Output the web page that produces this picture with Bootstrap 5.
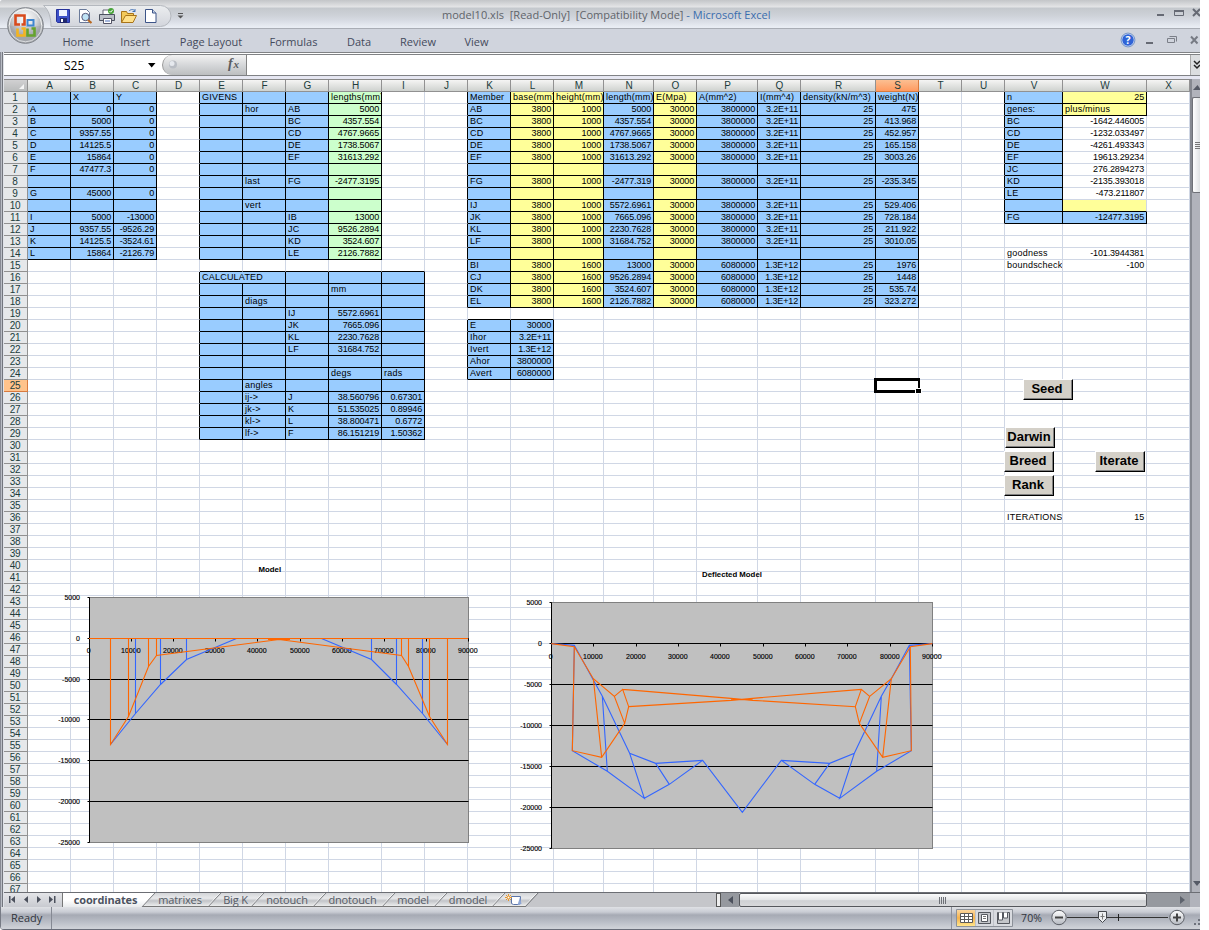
<!DOCTYPE html>
<html lang="en">
<head>
<meta charset="utf-8">
<title>model10.xls - Microsoft Excel</title>
<link href="https://cdn.jsdelivr.net/npm/bootstrap@5.3.0/dist/css/bootstrap.min.css" rel="stylesheet">
<style>
body{background:#fff;overflow:hidden;font-family:"Open Sans","Noto Sans",sans-serif;font-size:11px;line-height:1}
.win{width:1200px;height:930px;overflow:hidden;background:#d0d4dd;border-bottom:1px solid #686c78;border-radius:3px 0 0 4px}
.titlebar{height:29px;background:linear-gradient(#c3c5c8 0,#e4e5e7 7px,#c4c8cd 8px,#cdd1d7 15px,#d6dae2 20px,#e9edf4 27px);border-bottom:1px solid #a9adb5}
.caption-text{left:442px;top:9px;letter-spacing:.02px;color:#60646a;white-space:pre}
.caption-text b{font-weight:400;color:#3a6dae}
.menu-row{height:23px;padding-left:56px;color:#444a5c}
.menu-row span{text-align:center;padding-top:7px;padding-left:1px;white-space:nowrap}
.frame{width:1200px;border-left:1px solid #878a94;box-shadow:inset 1px 0 #b9bdc5,inset 2px 0 #73767e,inset 3px 0 #dfe2e8}
.fbar{margin-left:3px;height:24px;border-top:1px solid #808285;border-bottom:1px solid #808285;background:#fff;box-shadow:inset 0 1px #fff,inset 0 2px #808285}
.namebox{width:158px;font-size:12px;color:#000;padding-top:3px}
.fxpill{width:85px;margin-top:2px;background:linear-gradient(#f2f2f2,#d0d2d4 60%,#bcbec0);border-right:1px solid #838383;border-left:1px solid #989898;border-radius:10px 0 0 10px}
.gap{height:3px;margin-left:3px;background:#e6e7f2}
.sheet{margin-left:3px;height:813px;width:1186px;overflow:hidden;background:#fff}
.grid{table-layout:fixed;border-collapse:separate;border-spacing:0;width:1186px;font-family:"Liberation Sans",sans-serif;font-size:9px;color:#000;border-top:1px solid #888}
.grid th{font-weight:400;font-size:10px;text-align:center;padding:0;color:#203c3c;overflow:hidden;border-right:1px solid #919191;border-bottom:1px solid #919191;line-height:11px;height:12px}
.grid thead th{background:linear-gradient(#f5f5f4,#cfd2cf);padding-left:1px}
.grid thead th:first-child{padding:0}
.grid tbody th{background:#e6e8ea;padding-right:1px;letter-spacing:-.3px}
.grid thead th.sel{background:linear-gradient(#fcbf92,#ff9a60);border-color:#d87a3e}
.grid tbody th.sel{background:#ffc38b;border-color:#d87a3e}
.grid td{height:12px;padding:0 0 0 2px;line-height:11px;letter-spacing:.22px;border-right:1px solid #d0d7e5;border-bottom:1px solid #d0d7e5;overflow:hidden;white-space:nowrap}
.grid td.num{text-align:right;padding:0 2px 0 0;letter-spacing:-.15px}
.grid .bl{background:#9cf}.grid .ye{background:#ffff99}.grid .gr{background:#ccffcc}
.grid .br{border-right-color:#000}.grid .bb{border-bottom-color:#000}
.cbtn{width:50px;height:21px;background:#d4d0c8;border:1px solid #fff;border-right:1px solid #000;border-bottom:1px solid #000;box-shadow:inset -1px -1px #808080;font:bold 13px/14px "Liberation Sans",sans-serif;text-align:center;color:#000;padding:0 2px 2px 0;white-space:nowrap}
.cursor{left:870px;top:299px;width:46px;height:15px;border:2px solid #000;border-width:3px 2px 3px 3px}
.handle{left:911px;top:309px;width:7px;height:6px;background:#000;border:1px solid #fff}
.vscroll{width:10px;height:813px;background:#b1b3bb;border-left:2px solid #868991;overflow:hidden}
.vthumb{margin-top:3px;height:96px;background:linear-gradient(90deg,#fff,#dfe1e3);border:1px solid #6f7177;border-right:0;border-radius:2px 0 0 2px}
.tabs-row{margin-left:3px;height:15px;background:#c5c6ca;border-top:1px solid #6c6e74;color:#555b66}
.tabnav{width:59px;position:relative;z-index:2;background:linear-gradient(#e4e5e8,#c8cad0);border-right:1px solid #777}
.stab{position:relative;text-align:center;padding:1px 4px 0 0;z-index:1;white-space:nowrap;letter-spacing:-.15px;flex:none}
.stab::before{content:"";position:absolute;z-index:-1;inset:0 0 0 0;transform:skewX(-43deg);background:linear-gradient(#d3d5d8,#e8e9eb 40%,#c2c4c8 60%,#eceded);border-right:1px solid #686a6e;border-bottom:1px solid #777;box-shadow:inset -1px 0 #fff}
.stab.on{font-weight:700;padding-right:1px;color:#4c5260}
.stab.on::before{background:linear-gradient(#fff 50%,#e8eaec);left:-8px;border-bottom:0}
.statusbar{height:23px;background:linear-gradient(#dfe1e5 0,#c9ccd4 5px,#a6aab4 8px,#b7bbc4 14px,#ced1d7 21px);color:#30343c}
.hthumb{width:408px;background:linear-gradient(#fbfbfb,#e4e5e7 50%,#cfd1d4 55%,#d8d9db);border:1px solid #55575c;border-radius:2px}
svg{display:block}
.clab{font:7px "Liberation Sans",sans-serif;fill:#000;stroke:#000;stroke-width:.15px}
.ctitle{font:bold 7.8px "Liberation Sans",sans-serif}
</style>
</head>
<body>
<div class="win position-relative">
  <div class="titlebar position-relative">
    <div class="position-absolute caption-text">model10.xls  [Read-Only]  [Compatibility Mode] <b>- Microsoft Excel</b></div>
    <svg class="position-absolute top-0 start-0" width="200" height="50" style="z-index:3">
      <defs>
        <linearGradient id="pill" x2="0" y2="1"><stop stop-color="#eceef0"/><stop offset="1" stop-color="#d2d5dc"/></linearGradient>
        <radialGradient id="orb" cy=".3"><stop stop-color="#fff"/><stop offset=".6" stop-color="#d9dbde"/><stop offset="1" stop-color="#a5a8ac"/></radialGradient>
      </defs>
      <path d="M43.500 5.500h117a10.500 10.500 0 0 1 0 21H51C51 18 49 10 43.500 5.500z" fill="url(#pill)" stroke="#b4b8be"/>
      <circle cx="25.500" cy="25.500" r="17.800" fill="url(#orb)" stroke="#7f8389"/>
      <circle cx="25.500" cy="25.500" r="16.300" fill="none" stroke="#f7f8f8"/>
      <path d="M9 26h33a16.500 16.500 0 0 1-33 0z" fill="#9da0a4" opacity=".3"/>
      <g fill="none" stroke-width="2.600">
        <path d="M24.500 18v-2.500h-9v9h4.500M24.500 18v6.500h-3" stroke="#d84a1c"/>
        <path d="M27.500 20h6v5.500h-6z" stroke="#3d86d0" stroke-width="2"/>
        <path d="M17.500 28.500v7h7v-7h-3" stroke="#f4b41f"/>
        <path d="M27.500 28.500v7h7v-7h-3" stroke="#65a32d"/>
      </g>
      <!-- save -->
      <path d="M56.500 9.500h13v13h-12l-1-1z" fill="#3c50c8" stroke="#26329a"/><path d="M59 10h8v6h-8z" fill="#eef2ff"/><path d="M60 18h7v5h-7z" fill="#20286e"/><path d="M61 19h2v3h-2z" fill="#fff"/>
      <!-- print preview -->
      <path d="M79.500 9.500h7l3 3v10h-10z" fill="#fff" stroke="#6a7a9a"/><circle cx="85.500" cy="17" r="3.700" fill="#bfe3f5" stroke="#557"/><path d="M88 20l3.500 3" stroke="#b9681f" stroke-width="2.200"/>
      <!-- quick print -->
      <path d="M103 10h8v5h-8z" fill="#fff" stroke="#667"/><path d="M99.500 14.500h15v6h-15z" fill="#bcc0c8" stroke="#4c5260"/><path d="M103.500 18.500h8v5h-8z" fill="#fff" stroke="#556"/><path d="M105 21h5" stroke="#4a6fb8"/><circle cx="111" cy="11" r="3" fill="#47a437"/><path d="M109.500 11l1.200 1.200 2-2.400" fill="none" stroke="#fff"/>
      <!-- open -->
      <path d="M121.500 22.500v-11h5l1 2h6v3" fill="#f3c95a" stroke="#a8741a"/><path d="M121.500 22.500l4-7h11l-3.500 7z" fill="#ffe08a" stroke="#a8741a"/><path d="M129 11c2-2 5-2 6 .5m0 0v-2.500m0 2.500h-2.500" fill="none" stroke="#3f6fb5"/>
      <!-- new -->
      <path d="M145.500 9.500h7l3.500 3.500v9.500h-10.500z" fill="#fff" stroke="#3c5488"/><path d="M152.500 9.500v3.500h3.500" fill="#c9d5ea" stroke="#3c5488"/>
      <path d="M178 13.500h5" stroke="#555"/><path d="M177.500 15.500h6l-3 3z" fill="#555"/>
    </svg>
    <svg class="position-absolute top-0" width="90" height="52" style="left:1110px;z-index:3">
      <g stroke="#666a74" fill="none"><path d="M47 15h7" stroke-width="2"/><path d="M64.500 10.500h9v5h-9z"/><path d="M64 11h10" stroke-width="2"/><path d="M83 9l7 7M90 9l-7 7" stroke-width="2"/>
      <path d="M36 43h7" stroke-width="2"/><path d="M59.500 36.500h7v5M57.500 38.500h7v4h-7z" stroke="#7b7f88"/><path d="M81 36.500l6.500 7M87.500 36.500l-6.500 7" stroke-width="2" stroke="#777b84"/></g>
      <circle cx="18" cy="40" r="6.300" fill="#2f63d6" stroke="#eaf1ff" stroke-width="1"/><circle cx="18" cy="40" r="6.900" fill="none" stroke="#4774b8" stroke-width=".7"/><text x="18" y="44" text-anchor="middle" font-size="10.500" font-weight="700" fill="#fff">?</text>
    </svg>
  </div>
  <div class="menu-row d-flex">
    <span style="width:43px">Home</span><span style="width:71px">Insert</span><span style="width:81px">Page Layout</span><span style="width:84px">Formulas</span><span style="width:47px">Data</span><span style="width:71px">Review</span><span style="width:46px">View</span>
  </div>
  <div class="frame">
    <div class="fbar d-flex">
      <div class="namebox d-flex position-relative"><span style="margin-left:60px;margin-top:4px">S25</span>
        <svg class="position-absolute" style="left:144px;top:10px" width="8" height="5"><path d="M0 0h7.500L3.700 4.500z"/></svg></div>
      <div class="fxpill"><svg width="84" height="20"><circle cx="10" cy="9.500" r="4" fill="#b9bdc4"/><circle cx="9" cy="8.500" r="2.500" fill="#e6e9ee"/><text x="65" y="13" font-family="Liberation Serif" font-style="italic" font-weight="700" font-size="14" fill="#5a5c60">f</text><text x="70.500" y="13" font-family="Liberation Serif" font-style="italic" font-weight="700" font-size="11" fill="#5a5c60">x</text></svg></div>
      <div class="ms-auto" style="width:10px;margin-top:2px;background:#dcdee0;border-left:1px solid #aaa"><svg width="9" height="20"><path d="M3 6l3 3 3-3M3 10l3 3 3-3" fill="none" stroke="#222" stroke-width="1.500"/></svg></div>
    </div>
    <div class="gap"></div>
    <div class="d-flex">
      <div class="sheet position-relative">
        <table class="grid" id="grid"></table>
        <svg class="position-absolute top-0 start-0" width="1186" height="813" viewBox="4 79 1186 813" id="charts"></svg>
        <button class="cbtn position-absolute" style="left:1019px;top:300px">Seed</button>
        <button class="cbtn position-absolute" style="left:1001px;top:348px">Darwin</button>
        <button class="cbtn position-absolute" style="left:1000px;top:372px">Breed</button>
        <button class="cbtn position-absolute" style="left:1000px;top:396px">Rank</button>
        <button class="cbtn position-absolute" style="left:1091px;top:372px">Iterate</button>
        <div class="cursor position-absolute"></div><div class="handle position-absolute"></div>
      </div>
      <div class="vscroll">
        <svg width="8" height="15"><path d="M1 11h8L5.500 6z" fill="#555a66"/></svg>
        <div class="vthumb"><svg width="8" height="94"><path d="M2 44.500h6M2 46.500h6M2 48.500h6M2 50.500h6" stroke="#777"/></svg></div>
        <svg width="8" height="699"><path d="M1 688h8L5 693z" fill="#555a66"/></svg>
      </div>
    </div>
    <div class="tabs-row d-flex">
      <div class="tabnav"><svg width="58" height="14" fill="#4b505c"><path d="M5 3h1.500v7H5zM11 3v7L7 6.500zM24 3v7l-4-3.500zM33 3v7l4-3.500zM45 3v7l4-3.500zM50 3h1.500v7H50z"/></svg></div>
      <div class="stab on" style="width:86px">coordinates</div><div class="stab" style="width:66px">matrixes</div><div class="stab" style="width:43px;padding-right:2px">Big K</div><div class="stab" style="width:62px">notouch</div><div class="stab" style="width:69px">dnotouch</div><div class="stab" style="width:52px">model</div><div class="stab" style="width:58px">dmodel</div>
      <div class="stab" style="width:33px;padding:0"><svg width="33" height="14"><path d="M12.500 3.500h9v7l-2 1h-5l-2-1z" fill="#fff" stroke="#5b74a8"/><path d="M21 4l1.500 7-4 1z" fill="#8ea6d4"/><path d="M9.500 1v7M6 4.500h7M7 2l5 5M12 2L7 7" stroke="#e8962a"/><circle cx="9.500" cy="4.500" r="1" fill="#fff"/></svg></div>
      <div class="flex-grow-1"></div>
      <div style="width:5px;border:1px solid #555;background:#eee"></div>
      <div style="width:18px;background:#96999f"><svg width="18" height="14"><path d="M12 3v8L7 7z" fill="#4b505c"/></svg></div>
      <div class="hthumb"><svg width="406" height="12"><path d="M199.500 3v7M201.500 3v7M203.500 3v7M205.500 3v7" stroke="#6d7076"/></svg></div>
      <div style="width:43px;background:#96999f"><svg width="43" height="14"><path d="M33 3v8l5-4z" fill="#5d626c"/></svg></div>
      <div style="width:10px;background:#b1b3bb"></div>
    </div>
  </div>
  <div class="statusbar d-flex position-relative">
    <div style="width:52px;padding:5px 0 0 11px;border-right:1px solid #858993;box-shadow:inset 1px 0 #777b85">Ready</div>
    <div class="flex-grow-1"></div>
    <svg width="250" height="23" viewBox="950 907 250 23">
      <defs><linearGradient id="sel" x2="0" y2="1"><stop stop-color="#fbd7a0"/><stop offset=".5" stop-color="#f6b24c"/><stop offset="1" stop-color="#ffe58c"/></linearGradient>
      <linearGradient id="rb" x2="0" y2="1"><stop stop-color="#fff"/><stop offset="1" stop-color="#b4b8c0"/></linearGradient></defs>
      <path d="M951.500 907v22" stroke="#8d919b"/>
      <path d="M956.500 909.500h56v17h-56z" fill="#d8dadf" stroke="#8c9199"/><path d="M957 910h18v16h-18z" fill="url(#sel)"/><path d="M975.500 910v16M993.500 910v16" stroke="#bfc2c8"/>
      <path d="M960.500 913.500h12v9h-12z" fill="#fff" stroke="#5a5a5a"/><path d="M960 916.500h13M960 919.500h13M964.500 913v10M968.500 913v10" stroke="#5a5a5a"/>
      <path d="M978.500 912.500h12v11h-12z" fill="#c4c6ca" stroke="#55585f"/><path d="M981.500 914.500h6v7h-6z" fill="#fff" stroke="#55585f"/><path d="M983 916.500h3M983 918.500h3" stroke="#777"/>
      <path d="M997.500 912.500h12v11h-12z" fill="#c4c6ca" stroke="#55585f"/><path d="M998.500 912.500v7.500h4v-7.500M1003.500 912.500v5.500h4v-5.500" fill="#fff" stroke="#55585f"/>
      <text x="1021" y="921.500" font-size="10.500" fill="#30343c" textLength="21">70%</text>
      <path d="M1067 917.500h101" stroke="#333"/><path d="M1118.500 914v7" stroke="#222"/>
      <circle cx="1059" cy="917.500" r="7.200" fill="url(#rb)" stroke="#5c5f66"/><path d="M1055 917.500h8" stroke="#444" stroke-width="2"/>
      <circle cx="1177" cy="917.500" r="7.200" fill="url(#rb)" stroke="#5c5f66"/><path d="M1173 917.500h8M1177 913.500v8" stroke="#444" stroke-width="2"/>
      <path d="M1098.500 911.500h8v7l-4 4-4-4z" fill="#eceef0" stroke="#44474d"/><path d="M1102.500 913.500v6M1100.500 916.500h4" stroke="#777"/>
      <path d="M1194 923h2v2h-2zM1198 923h2v2h-2zM1198 919h2v2h-2z" fill="#6e727c"/>
    </svg>
  </div>
</div>
<script src="https://cdn.jsdelivr.net/npm/bootstrap@5.3.0/dist/js/bootstrap.bundle.min.js"></script>
<script>
const COLS = 'ABCDEFGHIJKLMNOPQRSTUVWX', W = {H:53, M:50, N:50, P:61, R:75, V:58, W:84};
const cells = {};
const put = (col, row, list) => list.split(',').forEach((v, i) => { if (v) cells[col + (row + i)] = v; });
put('A',2,'A,B,C,D,E,F,,G,,I,J,K,L');
put('B',1,'X,0,5000,9357.55,14125.5,15864,47477.3,,45000,,5000,9357.55,14125.5,15864');
put('C',1,'Y,0,0,0,0,0,0,,0,,-13000,-9526.29,-3524.61,-2126.79');
put('E',1,'GIVENS'); put('E',16,'CALCULATED');
put('F',2,'hor,,,,,,last,,vert'); put('F',18,'diags,,,,,,,angles,ij->,jk->,kl->,lf->');
put('G',2,'AB,BC,CD,DE,EF,,FG,,,IB,JC,KD,LE'); put('G',19,'IJ,JK,KL,LF,,,,J,K,L,F');
put('H',1,'lengths(mm),5000,4357.554,4767.9665,1738.5067,31613.292,,-2477.3195,,,13000,9526.2894,3524.607,2126.7882');
put('H',17,'mm,,5572.6961,7665.096,2230.7628,31684.752,,degs,,38.560796,51.535025,38.800471,86.151219');
put('I',24,'rads,,0.67301,0.89946,0.6772,1.50362');
put('K',1,'Member,AB,BC,CD,DE,EF,,FG,,IJ,JK,KL,LF,,BI,CJ,DK,EL,,E,Ihor,Ivert,Ahor,Avert');
put('L',20,'30000,3.2E+11,1.3E+12,3800000,6080000');
put('N',1,'length(mm),5000,4357.554,4767.9665,1738.5067,31613.292,,-2477.319,,5572.6961,7665.096,2230.7628,31684.752,,13000,9526.2894,3524.607,2126.7882');
put('S',1,'weight(N),475,413.968,452.957,165.158,3003.26,,-235.345,,529.406,728.184,211.922,3010.05,,1976,1448,535.74,323.272');
put('L',1,'base(mm)'); put('M',1,'height(mm)'); put('O',1,'E(Mpa)'); put('P',1,'A(mm^2)'); put('Q',1,'I(mm^4)'); put('R',1,'density(kN/m^3)');
for (let r = 2; r <= 18; r++) if (cells['K' + r]) {
  const v = r > 14;
  put('L',r,'3800'); put('M',r,v?'1600':'1000'); put('O',r,'30000'); put('P',r,v?'6080000':'3800000'); put('Q',r,v?'1.3E+12':'3.2E+11'); put('R',r,'25');
}
put('V',1,'n,genes:,BC,CD,DE,EF,JC,KD,LE,,FG,,,goodness,boundscheck');
put('W',1,'25,plus/minus,-1642.446005,-1232.033497,-4261.493343,19613.29234,276.2894273,-2135.393018,-473.211807,,-12477.3195,,,-101.3944381,-100');
put('V',36,'ITERATIONS'); put('W',36,'15');

const fills = {};
const fill = (c1, c2, r1, r2, cls) => {
  for (let c = COLS.indexOf(c1); c <= COLS.indexOf(c2); c++) for (let r = r1; r <= r2; r++) fills[COLS[c] + r] = cls;
};
fill('A','C',1,14,'bl'); fill('E','G',1,14,'bl'); fill('H','H',1,14,'gr'); fill('E','I',16,29,'bl');
fill('K','K',1,18,'bl'); fill('L','M',1,18,'ye'); fill('N','N',1,18,'bl'); fill('O','O',1,18,'ye'); fill('P','S',1,18,'bl');
fill('K','L',20,24,'bl'); fill('V','V',1,11,'bl'); fill('W','W',1,2,'ye'); fill('W','W',10,10,'ye'); fill('W','W',11,11,'bl');

let h = '<colgroup><col style="width:24px">' + [...COLS].map(c => `<col style="width:${W[c] || 43}px">`).join('') + '</colgroup><thead><tr><th><svg width="23" height="11"><path d="M0 0h23v11H0z" fill="#9a9c9f" opacity=".4"/><path d="M20 4v5h-5z" fill="#f5f5f5"/></svg></th>';
h += [...COLS].map(c => `<th class="${c === 'S' ? 'sel' : ''}">${c}</th>`).join('') + '</tr></thead><tbody>';
for (let r = 1; r <= 67; r++) {
  h += `<tr><th class="${r === 25 ? 'sel' : ''}">${r}</th>`;
  for (let i = 0; i < COLS.length; i++) {
    const c = COLS[i], k = c + r, f = fills[k], v = cells[k] || '';
    const span = k === 'E16' ? 2 : 1, next = COLS[i + span] + r, cl = [];
    if (f) cl.push(f);
    if ((f && k !== 'W10') || fills[next]) cl.push('br');
    if (f || (fills[c + (r + 1)] && r !== 9)) cl.push('bb');
    if (/^-?\d/.test(v)) cl.push('num');
    h += `<td colspan="${span}" class="${cl.join(' ')}">${v.replace('>', '&gt;')}</td>`;
    i += span - 1;
  }
  h += '</tr>';
}
document.getElementById('grid').innerHTML = h + '</tbody>';

// Charts: a grey plot area with five horizontal gridlines and the structure's members
const B = '#3366ff', O = '#ff6600';
const path = (d, col) => `<path d="${d}" fill="none" stroke="${col}" stroke-width="1.1"/>`;
function chart(x0, x1, ys, title, tx, ty, ly, body) {
  let s = `<rect x="${x0}" y="${ys[0]}" width="${x1 - x0}" height="${ys[6] - ys[0]}" fill="#c0c0c0" stroke="#808080"/>`;
  ys.forEach((y, i) => {
    if (i && i < 6) s += `<path d="M${x0} ${y}H${x1}" stroke="#000"/>`;
    s += `<path d="M${x0 - 2} ${y}h2" stroke="#000"/><text class="clab" x="${x0 - 9.5}" y="${y + 2.5}" text-anchor="end">${5000 - 5000 * i}</text>`;
  });
  s += `<path d="M${x0} ${ys[0]}V${ys[6]}" stroke="#000"/>`;
  for (let i = 0; i <= 9; i++) {
    const x = Math.floor(x0 + (x1 - x0) * i / 9) + .5;
    s += `<path d="M${x} ${ys[1]}v3" stroke="#000"/><text class="clab" x="${x - .7}" y="${ly}" text-anchor="middle">${i * 10000}</text>`;
  }
  return s + body + `<text class="ctitle" x="${tx}" y="${ty}" text-anchor="middle">${title}</text>`;
}
const b1 = path('M135.500 638V713.500M160.500 638V684.500M186.500 638V659.500M110.500 744.500L135.500 713.500L160.500 684.500L186.500 659.500L236.500 638.500M321.500 638.500L371.500 659.500L396.500 684.500L422.500 713.500L447.500 744.500M371.500 638V659.500M396.500 638V684.500M422.500 638V713.500', B)
 + path('M89 638.500H468M110.500 638V744.500L128.500 716.500L148.500 666.500L156.500 655.500L279 639.500L401.500 655.500L408.500 666.500L429.500 716.500L447.500 744.500V638M128.500 638V716.500M148.500 638V666.500M156.500 638V655.500M401.500 638V655.500M408.500 638V666.500M429.500 638V716.500M268 639.500H290', O);
const b2 = `<g transform="translate(500 560) scale(.33333)" fill="none" stroke-width="3.300"><path stroke="${B}" d="M154 251L223 256L280 360L307 409L389 580L467 610L608 601L727 757L844 601L989 610L1063 580L1144 409L1174 356L1228 256L1297 251M223 256L217 572L322 634L433 715L389 580M307 409L322 634M433 715L508 673L608 601M508 673L467 610M1228 256L1234 572L1130 634L1019 715L1063 580M1144 409L1130 634M1019 715L944 673L844 601M944 673L989 610"/><path stroke="${O}" d="M154 251L223 260L280 356L343 409L374 490L305 592L217 572L223 260M280 356L305 592M343 409L368 388L386 440L374 490M368 388L693 415L758 421L1066 440L1078 490L1109 409L1084 388L758 415L693 421L386 440M1297 251L1231 260L1174 356L1109 409M1078 490L1148 592L1234 572L1231 260M1174 356L1148 592M1084 388L1066 440M693 418H758"/></g>`;
document.getElementById('charts').innerHTML =
  chart(89.5, 468.5, [597.5,638.5,679.5,719.5,760.5,801.5,842.5], 'Model', 269.8, 572, 653, b1) +
  chart(551.5, 932.5, [602.5,643.5,684.5,725.5,766.5,807.5,848.5], 'Deflected Model', 732, 577, 659, b2);
</script>
</body>
</html>
